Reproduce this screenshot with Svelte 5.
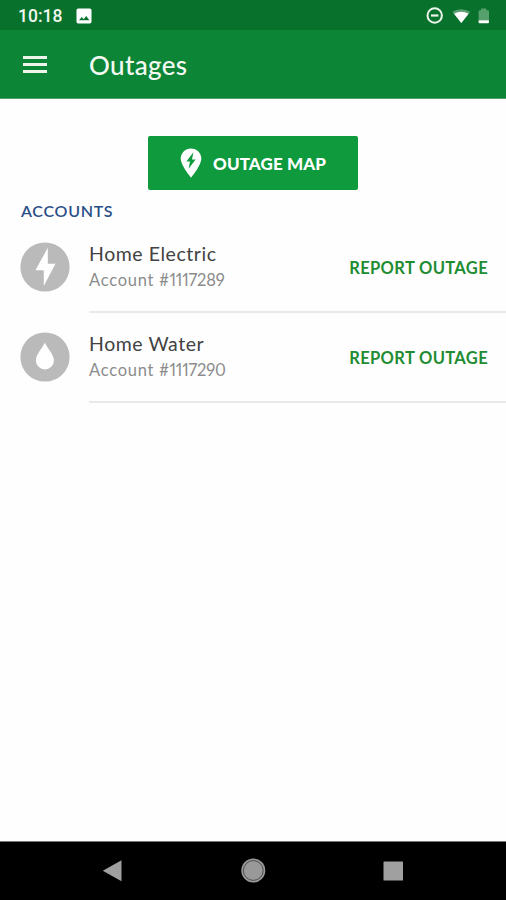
<div class="screen">
  <div class="statusbar">
    <span class="clock">10:18</span>
    <svg class="photo" width="16" height="16" viewBox="0 0 16 16">
      <path fill="#fff" fill-rule="evenodd" d="M2.2 .5h11.6a1.7 1.7 0 0 1 1.7 1.7v11.6a1.7 1.7 0 0 1-1.7 1.7H2.2A1.7 1.7 0 0 1 .5 13.8V2.2A1.7 1.7 0 0 1 2.2 .5zM3 12.2h10.4L10.2 8 7.7 11.2 5.8 9z" />
    </svg>
    <svg class="tray" width="68" height="20" viewBox="0 0 68 20">
      <circle cx="9.7" cy="9.5" r="7.2" fill="none" stroke="#eef5ec" stroke-width="2" />
      <path d="M6 9.5h7.4" stroke="#eef5ec" stroke-width="2.2" />
      <path fill="#5aa070" d="M27.3 5.8Q36 .6 45.3 5.8L36.3 17z" />
      <path fill="#fff" d="M29 7.8Q36.3 3.8 43.6 7.8L36.3 17z" />
      <path fill="#56a06d" d="M56 2.5h5.2v1.7h1.6a1.2 1.2 0 0 1 1.2 1.2V14H53.6V5.4a1.2 1.2 0 0 1 1.2-1.2H56z" />
      <path fill="#fff" d="M53.6 14.2H64v2a1 1 0 0 1-1 1h-8.4a1 1 0 0 1-1-1z" />
    </svg>
  </div>

  <header>
    <button class="menu" aria-label="Menu">
      <span></span>
      <span></span>
      <span></span>
    </button>
    <h1>Outages</h1>
  </header>

  <main>
    <button class="map">
      <svg width="22" height="30" viewBox="0 0 22 30">
        <path fill="#fff" d="M11 .4C5.2 .4 .7 4.9 .7 10.5 .7 17.5 11 29.6 11 29.6S21.3 17.5 21.3 10.5C21.3 4.9 16.8 .4 11 .4z" />
        <path fill="#0e9a3d" d="M13.4 4.2L6.4 13.6H10L8.6 20.8 15.6 11.4H12z" />
      </svg>
      <span>OUTAGE MAP</span>
    </button>

    <h2>ACCOUNTS</h2>

    {#each accounts as account}
      <div class="account">
        <svg class="badge" width="50" height="50" viewBox="0 0 50 50">
          <circle cx="25" cy="25" r="24.6" fill="#bababa" />
          {#if account.type === 'electric'}
            <path fill="#fff" d="M27.8 5.8L15.4 28.3H23.8V44L35.4 21.8H27.8z" />
          {:else}
            <path fill="#fff" d="M24.8 10.8C23 15.5 15.9 22.2 15.9 28.5a9 9 0 0 0 18 0C33.9 22.2 26.6 15.5 24.8 10.8z" />
          {/if}
        </svg>
        <div class="details">
          <div class="names">
            <div class="name">{account.name}</div>
            <div class="number">Account #<span>{account.number}</span></div>
          </div>
          <button class="report">REPORT OUTAGE</button>
        </div>
      </div>
    {/each}
  </main>

  <nav>
    <svg width="506" height="58" viewBox="0 0 506 58">
      <path fill="#a0a0a0" d="M102.8 28.7L121.5 18.2V39.2z" />
      <circle cx="253.3" cy="28.5" r="12" fill="#999" />
      <circle cx="253.3" cy="28.5" r="9.9" fill="none" stroke="#444" stroke-width=".9" />
      <rect x="383.5" y="19.5" width="19.5" height="19" rx=".6" fill="#a0a0a0" />
    </svg>
  </nav>
</div>

<style>
  :global(body) {
    background: #fff;
  }

  .screen {
    display: flex;
    flex-direction: column;
    height: 900px;
    overflow: hidden;
    background: #fefefe;
    font-family: Lato, 'Liberation Sans', sans-serif;
  }

  button {
    border: none;
    padding: 0;
    background: none;
    font-family: inherit;
    cursor: pointer;
  }

  .statusbar {
    display: flex;
    align-items: center;
    flex: none;
    box-sizing: border-box;
    height: 30px;
    padding: 1px 13px 0 18px;
    background: #08722d;
  }

  .clock {
    width: 58px;
    color: #f1f7ef;
    font-family: Roboto, sans-serif;
    font-size: 17.5px;
    font-weight: 500;
  }

  .tray {
    margin-left: auto;
  }

  header {
    display: flex;
    align-items: center;
    flex: none;
    box-sizing: border-box;
    height: 69px;
    padding: 0 23px;
    border-bottom: 1px solid #5d9d6d;
    background: #0d8537;
  }

  .menu {
    display: flex;
    flex-direction: column;
    gap: 4px;
    width: 24px;
    margin-right: 42px;
  }

  .menu span {
    height: 3px;
    background: #eef6ec;
  }

  h1 {
    margin: 2px 0 0;
    color: #f4faf3;
    font-size: 26px;
    font-weight: 500;
    line-height: 32px;
    letter-spacing: 0.35px;
  }

  main {
    display: flex;
    flex-direction: column;
    flex: 1;
    padding-top: 37px;
  }

  .map {
    display: flex;
    align-items: center;
    align-self: center;
    box-sizing: border-box;
    width: 210px;
    height: 54px;
    padding-left: 32px;
    gap: 11px;
    border-radius: 2px;
    background: #0e9a3d;
    color: #fff;
    font-size: 17px;
    font-weight: 900;
    letter-spacing: 0.1px;
    white-space: nowrap;
  }

  h2 {
    margin: 11px 0 0 21px;
    color: #2a4f87;
    font-size: 16px;
    font-weight: 600;
    line-height: 20px;
    letter-spacing: 0.7px;
  }

  .account {
    display: flex;
    height: 90px;
    padding-left: 20px;
    gap: 19px;
  }

  h2 + .account {
    margin-top: 1px;
  }

  .badge {
    flex: none;
    margin-top: 20px;
  }

  .details {
    display: flex;
    flex: 1;
    justify-content: space-between;
    box-sizing: border-box;
    margin-bottom: -1px;
    padding: 19px 18px 0 0;
    border-bottom: 2px solid #e9e9e9;
  }

  .name {
    color: #424242;
    font-size: 19.5px;
    line-height: 25px;
    letter-spacing: 0.55px;
  }

  .number {
    color: #8c8c8c;
    font-size: 16.5px;
    line-height: 28px;
    letter-spacing: 0.75px;
  }

  .number span {
    font-variant-numeric: proportional-nums;
    letter-spacing: -0.2px;
  }

  .report {
    align-self: flex-start;
    margin-top: 16px;
    color: #218c31;
    font-size: 16.5px;
    font-weight: 700;
    line-height: 22px;
    letter-spacing: 0.35px;
    white-space: nowrap;
  }

  nav {
    flex: none;
    height: 58px;
    border-top: 1px solid #777;
    background: #000;
  }

  nav svg {
    display: block;
  }
</style>

<script>
  const accounts = [
    { type: 'electric', name: 'Home Electric', number: '1117289' },
    { type: 'water', name: 'Home Water', number: '1117290' }
  ];
</script>
